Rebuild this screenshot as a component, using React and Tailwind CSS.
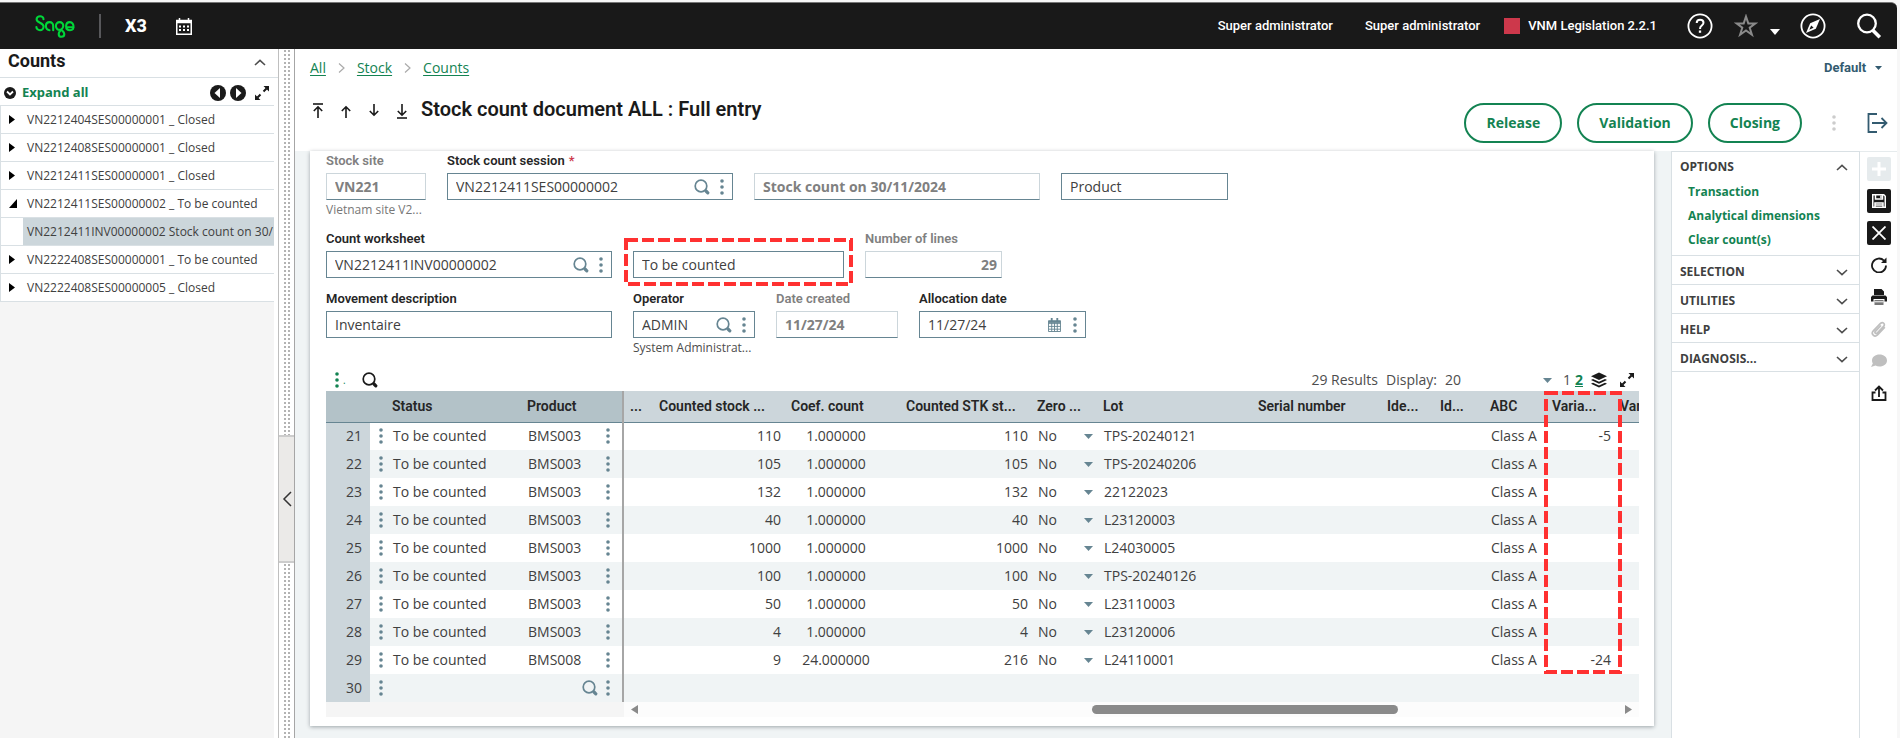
import React, { useState } from 'react';
import clsx from 'clsx';

const treeItems = [
  { label: 'VN2212404SES00000001 _ Closed' },
  { label: 'VN2212408SES00000001 _ Closed' },
  { label: 'VN2212411SES00000001 _ Closed' },
  { label: 'VN2212411SES00000002 _ To be counted', open: true },
  { label: 'VN2212411INV00000002 Stock count on 30/11/2024', child: true },
  { label: 'VN2222408SES00000001 _ To be counted' },
  { label: 'VN2222408SES00000005 _ Closed' },
];

const lines = [
  { n: 21, product: 'BMS003', counted: '110', coef: '1.000000', stk: '110', lot: 'TPS-20240121', variance: '-5' },
  { n: 22, product: 'BMS003', counted: '105', coef: '1.000000', stk: '105', lot: 'TPS-20240206' },
  { n: 23, product: 'BMS003', counted: '132', coef: '1.000000', stk: '132', lot: '22122023' },
  { n: 24, product: 'BMS003', counted: '40', coef: '1.000000', stk: '40', lot: 'L23120003' },
  { n: 25, product: 'BMS003', counted: '1000', coef: '1.000000', stk: '1000', lot: 'L24030005' },
  { n: 26, product: 'BMS003', counted: '100', coef: '1.000000', stk: '100', lot: 'TPS-20240126' },
  { n: 27, product: 'BMS003', counted: '50', coef: '1.000000', stk: '50', lot: 'L23110003' },
  { n: 28, product: 'BMS003', counted: '4', coef: '1.000000', stk: '4', lot: 'L23120006' },
  { n: 29, product: 'BMS008', counted: '9', coef: '24.000000', stk: '216', lot: 'L24110001', variance: '-24' },
  { n: 30 },
];

const menus = ['SELECTION', 'UTILITIES', 'HELP', 'DIAGNOSIS...'];

/* ---------- icons ---------- */

function Dots({ className }) {
  return (
    <svg viewBox="0 0 4 16" className={clsx('w-1 h-4', className)} fill="currentColor">
      <circle cx="2" cy="2" r="1.8" />
      <circle cx="2" cy="8" r="1.8" />
      <circle cx="2" cy="14" r="1.8" />
    </svg>
  );
}

function SearchIcon({ className }) {
  return (
    <svg viewBox="0 0 16 16" className={className} fill="none" stroke="currentColor">
      <circle cx="7" cy="7" r="5.8" strokeWidth="1.7" />
      <path d="M12 12l1.800 1.800" strokeWidth="3.2" strokeLinecap="round" />
    </svg>
  );
}

function Caret({ className }) {
  return (
    <svg viewBox="0 0 8 5" className={clsx('pointer-events-none shrink-0', className)} fill="currentColor" preserveAspectRatio="none">
      <path d="M0 0h8L4 5z" />
    </svg>
  );
}

function Chevron({ up }) {
  return (
    <svg viewBox="0 0 12 7" className="w-3 h-[7px] text-[#4d4d4d]" fill="none" stroke="currentColor" strokeWidth="1.6">
      <path d={up ? 'M1 6l5-4.6L11 6' : 'M1 1l5 4.6L11 1'} />
    </svg>
  );
}

function ExpandIcon() {
  return (
    <svg viewBox="0 0 16 16" className="w-4 h-4" fill="currentColor">
      <path d="M9.500 1H15v5.500zM1 9.500V15h5.500z" />
      <path d="M9.500 6.500l3-3M6.500 9.500l-3 3" stroke="currentColor" strokeWidth="2" />
    </svg>
  );
}

function StepArrow({ down, bar }) {
  return (
    <svg viewBox="0 0 12 16" className="w-3 h-4" fill="none" stroke="currentColor" strokeWidth="1.6">
      <path d={down ? 'M6 1v11M1.8 8L6 12.2 10.2 8' : 'M6 15V4M1.8 8L6 3.8 10.2 8'} />
      {bar && <path d={down ? 'M1 15h10' : 'M1 1h10'} />}
    </svg>
  );
}

function SageLogo() {
  return (
    <svg viewBox="0 0 40 23" className="w-10 h-[23px]" fill="none" stroke="#00d639" strokeWidth="2.1" strokeLinecap="round">
      <path d="M8.5 4.2C8.5 2.3 7 1.2 5.1 1.2S1.6 2.5 1.6 4.3c0 4 7 2.900 7 7.300 0 2.100-1.600 3.600-3.600 3.600S1.400 13.900 1.400 12" />
      <path d="M18.200 15.200v-4.300c0-2.300-1.500-3.800-3.600-3.800s-3.700 1.600-3.700 4 1.600 4.100 3.600 4.100" />
      <path d="M25.500 14.800c-2.400.6-4.600-1.200-4.600-3.700 0-2.300 1.600-4 3.700-4s3.700 1.700 3.700 4c0 3.200-4.600 4.700-4.600 7.800 0 1.700 1.200 2.900 2.800 2.900s2.800-1.200 2.800-2.800c0-1.400-.9-2.300-1.800-3.100" />
      <path d="M31.500 12.200h7c.2-3-1.300-5.100-3.600-5.100-2.200 0-3.800 1.700-3.800 4.100s1.600 4.100 3.900 4.100c1.300 0 2.400-.5 3.100-1.400" />
    </svg>
  );
}

/* ---------- form parts ---------- */

function Field({ id, label, width, value, readOnly, required, helper, search, calendar, number, children }) {
  const muted = readOnly;
  return (
    <div className={clsx('relative', width, !label && 'pt-5')}>
      {label && (
        <label htmlFor={id} className={clsx("block mb-1 font-['Roboto',sans-serif] text-[13px] leading-4 font-semibold whitespace-nowrap", muted ? 'text-[#808080]' : 'text-[#262626]')}>
          {label}
          {required && <span className="ml-1 text-[#cd384b]">*</span>}
        </label>
      )}
      <div
        className={clsx(
          'flex items-center h-[27px] border bg-white',
          muted ? 'border-[#ccd6db] border-b-[#668592]' : 'border-[#668592]'
        )}
      >
        <input
          id={id}
          aria-label={label ? undefined : id}
          defaultValue={value}
          readOnly={readOnly}
          className={clsx(
            'min-w-0 flex-1 h-full text-sm outline-none',
            number ? 'text-right px-1' : 'px-2',
            muted ? 'font-bold text-[#808080]' : 'text-[#404040]'
          )}
        />
        {search && (
          <button aria-label="Search" className="mr-2.5 text-[#668592]">
            <SearchIcon className="w-4 h-4" />
          </button>
        )}
        {calendar && (
          <button aria-label="Pick a date" className="mr-3 text-[#668592]">
            <svg viewBox="0 0 14 15" className="w-[13px] h-3.5" fill="none" stroke="currentColor">
              <path d="M0.500 3h13v11.500h-13zM0.500 6h13M0.500 9h13M0.500 12h13M4 5v9.500M7 5v9.500M10 5v9.500" />
              <path d="M0.500 4h13" strokeWidth="2.500" />
              <path d="M4 0v4M10 0v4" strokeWidth="2" />
            </svg>
          </button>
        )}
        {(search || calendar) && (
          <button aria-label="Actions" className="mr-2 text-[#668592]">
            <Dots />
          </button>
        )}
      </div>
      {helper && <p className={clsx('mt-0.5 text-xs leading-4 whitespace-nowrap', muted ? 'text-[#777]' : 'text-[#4d4d4d]')}>{helper}</p>}
      {children}
    </div>
  );
}

function HighlightBox({ className, w, h }) {
  return (
    <svg viewBox={`0 0 ${w} ${h}`} className={clsx('absolute pointer-events-none', className)} fill="none">
      <rect x="2" y="2" width={w - 4} height={h - 4} stroke="#ff3131" strokeWidth="4" strokeDasharray="12 4" />
    </svg>
  );
}

/* ---------- page sections ---------- */

function Header() {
  return (
    <header className="flex items-center h-[47px] pl-[35px] pr-[15px] bg-[#191919] border-t border-[#777] rounded-tr-md text-white font-['Roboto',sans-serif]">
      <SageLogo />
      <span className="ml-6 w-0.5 h-6 bg-[#58585b]" />
      <span className="ml-6 text-lg font-extrabold">X3</span>
      <button aria-label="Calendar" className="ml-[29px]">
        <svg viewBox="0 0 16 17" className="w-4 h-[17px]" fill="none" stroke="currentColor">
          <path d="M0.750 2.500h14.500v13.750H0.750z" strokeWidth="1.500" />
          <path d="M0.750 4h14.500" strokeWidth="2.500" />
          <path d="M3.500 0v3M12.500 0v3" strokeWidth="1.500" />
          <path d="M3 8.500h10M3 12h10" strokeWidth="2" strokeDasharray="2 2" />
        </svg>
      </button>

      <div className="ml-auto flex items-center text-[13px] font-medium">
        <span>Super administrator</span>
        <span className="ml-8">Super administrator</span>
        <span className="ml-6 w-4 h-4 bg-[#cd384b]" />
        <span className="ml-2">VNM Legislation 2.2.1</span>
        <button aria-label="Help" className="ml-[30px]">
          <svg viewBox="0 0 26 26" className="w-[26px] h-[26px]" fill="none" stroke="currentColor">
            <circle cx="13" cy="13" r="11.600" strokeWidth="1.800" />
            <path d="M9.700 10c0-2 1.400-3.300 3.400-3.300s3.400 1.200 3.400 3.100c0 2.600-3.400 2.800-3.400 5.400v.8" strokeWidth="2" />
            <path d="M13 17.500v2.300" strokeWidth="2.300" />
          </svg>
        </button>
        <button aria-label="Favourites" className="ml-[21px] flex items-center text-[#8a8a8a]">
          <svg viewBox="0 0 24 24" className="w-6 h-6" fill="none" stroke="currentColor" strokeWidth="2">
            <path d="M12 2.500l2.300 6.900h7.200l-5.800 4.300 2.200 7L12 16.400l-5.900 4.300 2.200-7-5.800-4.300h7.200z" />
          </svg>
          <Caret className="w-2.5 h-1.5 ml-3 mt-3 text-white" />
        </button>
        <button aria-label="Navigate" className="ml-5">
          <svg viewBox="0 0 26 26" className="w-[26px] h-[26px]" fill="none" stroke="currentColor">
            <circle cx="13" cy="13" r="11.600" strokeWidth="1.800" />
            <path d="M20 6l-4.200 9.800L6 20l4.200-9.800z" fill="currentColor" stroke="none" />
            <path d="M9.300 16.700l1.900-4.300 2.400 2.400z" fill="#191919" stroke="none" />
          </svg>
        </button>
        <button aria-label="Search" className="ml-[30px]">
          <svg viewBox="0 0 26 26" className="w-[26px] h-[26px]" fill="none" stroke="currentColor">
            <circle cx="11" cy="10.500" r="8.800" strokeWidth="2.300" />
            <path d="M16.800 17.200l7 7" strokeWidth="3.600" />
          </svg>
        </button>
      </div>
    </header>
  );
}

function Sidebar() {
  return (
    <aside className="w-[279px] shrink-0 flex flex-col border-r border-[#bfbfbf] bg-white">
      <div className="flex items-start justify-between h-[29px] pl-2 pr-3 border-b border-[#d9e0e4]">
        <h2 className="font-['Roboto',sans-serif] text-lg leading-6 font-bold text-[#1a1a1a]">Counts</h2>
        <button aria-label="Collapse" className="mt-2.5">
          <Chevron up />
        </button>
      </div>
      <div className="flex items-center h-[27px] pt-0.5 pl-1 pr-2 text-[#1a1a1a]">
        <svg viewBox="0 0 12 12" className="w-3 h-3" fill="none">
          <circle cx="6" cy="6" r="6" fill="currentColor" />
          <path d="M3 4.500l3 3 3-3" stroke="#fff" strokeWidth="1.800" />
        </svg>
        <button className="ml-1.5 font-['Noto_Sans',sans-serif] text-[13px] font-bold text-[#138352]">Expand all</button>
        <button aria-label="Previous" className="ml-auto">
          <svg viewBox="0 0 16 16" className="w-4 h-4">
            <circle cx="8" cy="8" r="8" fill="currentColor" />
            <path d="M10 3v10L4.500 8z" fill="#fff" />
          </svg>
        </button>
        <button aria-label="Next" className="ml-1">
          <svg viewBox="0 0 16 16" className="w-4 h-4">
            <circle cx="8" cy="8" r="8" fill="currentColor" />
            <path d="M6 3v10l5.500-5z" fill="#fff" />
          </svg>
        </button>
        <button aria-label="Full screen" className="ml-2">
          <ExpandIcon />
        </button>
      </div>
      <div className="flex-1 mr-1 border-t border-[#d9e0e4] bg-[#f5f5f5]">
        <ul className="text-xs text-[#404040]">
          {treeItems.map((item) => (
            <li key={item.label} className="flex items-stretch h-7 border-l border-b border-[#d9e0e4] bg-white">
              <span className="w-[22px] shrink-0 flex items-center pl-2 text-black">
                {!item.child && (
                  <svg viewBox="0 0 8 10" className={clsx('h-[9px]', item.open ? 'w-2' : 'w-1.5')} preserveAspectRatio="none" fill="currentColor">
                    <path d={item.open ? 'M8 0v10H0z' : 'M0 0l8 5-8 5z'} />
                  </svg>
                )}
              </span>
              <span className={clsx('flex-1 pl-1 leading-[27px] whitespace-nowrap overflow-hidden', item.child && 'bg-[#ccd6db]')}>{item.label}</span>
            </li>
          ))}
        </ul>
      </div>
    </aside>
  );
}

function Splitter() {
  return (
    <div className="w-4 shrink-0 flex flex-col items-center justify-center border-r border-[#a6a6a6]">
      <div className="w-2 flex-1 bg-[radial-gradient(#b3b3b3_1px,transparent_1px)] bg-[size:4px_4px]" />
      <button aria-label="Collapse panel" className="w-full h-32 flex items-center justify-center bg-[#ebeae8] border-y-2 border-[#ccc] text-[#333]">
        <svg viewBox="0 0 10 16" className="w-2.5 h-4" fill="none" stroke="currentColor" strokeWidth="1.500">
          <path d="M9 1L2 8l7 7" />
        </svg>
      </button>
      <div className="w-2 h-[175px] bg-[radial-gradient(#b3b3b3_1px,transparent_1px)] bg-[size:4px_4px]" />
    </div>
  );
}

function TitleBar() {
  return (
    <div className="pl-[15px] pr-[9px] pt-2">
      <div className="flex items-center justify-between h-[22px]">
        <nav className="flex items-center text-sm text-[#138352]">
          <a href="#all" className="underline underline-offset-2">All</a>
          <span className="px-3 text-[#aaa]">
            <svg viewBox="0 0 7 10" className="w-[7px] h-2.5" fill="none" stroke="currentColor" strokeWidth="1.200"><path d="M1 0.500L6 5 1 9.500" /></svg>
          </span>
          <a href="#stock" className="underline underline-offset-2">Stock</a>
          <span className="px-3 text-[#aaa]">
            <svg viewBox="0 0 7 10" className="w-[7px] h-2.5" fill="none" stroke="currentColor" strokeWidth="1.200"><path d="M1 0.500L6 5 1 9.500" /></svg>
          </span>
          <a href="#counts" className="underline underline-offset-2">Counts</a>
        </nav>
        <div className="flex items-center pr-1.5 text-[#335b70]">
          <select aria-label="Layout" className="appearance-none font-['Roboto',sans-serif] text-[13px] leading-4 font-bold mr-2">
            <option>Default</option>
          </select>
          <Caret className="w-[7px] h-1" />
        </div>
      </div>
      <div className="flex items-start h-[57px] mt-[15px]">
        <div className="flex items-center gap-4 h-[34px] ml-0.5 text-[#1a1a1a]">
          <button aria-label="First"><StepArrow bar /></button>
          <button aria-label="Previous"><StepArrow /></button>
          <button aria-label="Next"><StepArrow down /></button>
          <button aria-label="Last"><StepArrow down bar /></button>
        </div>
        <h1 className="ml-[13px] font-['Roboto',sans-serif] text-xl leading-[30px] font-semibold text-[#1a1a1a]">Stock count document ALL : Full entry</h1>
        <div className="ml-auto mt-[9px] flex items-center gap-[15px] text-sm font-bold text-[#138352]">
          <button className="h-10 px-5 border-2 border-[#138352] rounded-full">Release</button>
          <button className="h-10 px-5 border-2 border-[#138352] rounded-full">Validation</button>
          <button className="h-10 px-5 border-2 border-[#138352] rounded-full">Closing</button>
          <button aria-label="More" className="mx-[15px] text-[#ccc]">
            <Dots />
          </button>
          <button aria-label="Exit" className="text-[#335b70]">
            <svg viewBox="0 0 22 22" className="w-[22px] h-[22px]" fill="none" stroke="currentColor" strokeWidth="1.800">
              <path d="M11 2H2.500v18H11M6 11h14M15.500 6l5 5-5 5" />
            </svg>
          </button>
        </div>
      </div>
    </div>
  );
}

function LinesTable() {
  return (
    <div className="relative">
      <table className="w-full table-fixed text-sm text-[#404040] whitespace-nowrap">
        <colgroup>
          <col className="w-11" />
          <col className="w-4" />
          <col className="w-[135px]" />
          <col className="w-[102px]" />
          <col className="w-[30px]" />
          <col className="w-[132px]" />
          <col className="w-[101px]" />
          <col className="w-[145px]" />
          <col className="w-[66px]" />
          <col className="w-[155px]" />
          <col />
          <col className="w-[53px]" />
          <col className="w-[50px]" />
          <col className="w-[62px]" />
          <col className="w-[68px]" />
          <col className="w-[25px]" />
        </colgroup>
        <thead>
          <tr className="h-[31px] border-b border-[#668592] bg-[#ccd6db] text-left font-['Roboto',sans-serif] text-[#262626] [&>th]:font-semibold [&>th]:pl-1.5">
            <th className="bg-[#b3c2c8]" aria-label="Line" />
            <th className="bg-[#b3c2c8]" aria-label="Actions" />
            <th className="bg-[#b3c2c8]">Status</th>
            <th className="bg-[#b3c2c8] border-r-2 border-r-[#a6a6a6]">Product</th>
            <th className="overflow-hidden">...</th>
            <th>Counted stock ...</th>
            <th>Coef. count</th>
            <th><span className="pl-3.5">Counted STK st...</span></th>
            <th>Zero ...</th>
            <th>Lot</th>
            <th>Serial number</th>
            <th>Ide...</th>
            <th>Id...</th>
            <th>ABC</th>
            <th>Varia...</th>
            <th className="overflow-hidden">Variance</th>
          </tr>
        </thead>
        <tbody>
          {lines.map((line) => (
            <tr key={line.n} className="h-7 even:bg-[#f0f4f5] [&>td]:pl-[7px]">
              <td className="bg-[#ccd6db] pr-2 text-right">{line.n}</td>
              <td>
                <button aria-label="Line actions" className="flex ml-0.5 text-[#668592]"><Dots /></button>
              </td>
              <td>{line.product && 'To be counted'}</td>
              <td className="border-r-2 border-[#a6a6a6]">
                <div className="flex items-center pr-3 text-[#668592]">
                  <span className="text-[#404040]">{line.product}</span>
                  {!line.product && (
                    <button aria-label="Select product" className="ml-auto mr-2">
                      <SearchIcon className="w-4 h-4" />
                    </button>
                  )}
                  <button aria-label="Product actions" className={clsx(line.product && 'ml-auto')}>
                    <Dots />
                  </button>
                </div>
              </td>
              <td />
              <td className="pr-1 text-right">{line.counted}</td>
              <td className="pr-1.5 text-center">{line.coef}</td>
              <td className="pr-[3px] text-right">{line.stk}</td>
              <td>
                {line.product && (
                  <div className="flex items-center pr-1">
                    <select aria-label="Zero stock" className="flex-1 min-w-0 appearance-none">
                      <option>No</option>
                      <option>Yes</option>
                    </select>
                    <Caret className="w-[9px] h-[5px] text-[#668592]" />
                  </div>
                )}
              </td>
              <td>{line.lot}</td>
              <td />
              <td />
              <td />
              <td>{line.product && 'Class A'}</td>
              <td className="pr-[3px] text-right">{line.variance}</td>
              <td />
            </tr>
          ))}
        </tbody>
      </table>
      <div className="flex items-center h-[15px]">
        <div className="w-[298px] h-full bg-[#f5f5f5]" />
        <div className="flex-1 flex items-center h-full px-[7px] bg-[#fcfcfc] text-[#8a8a8a]">
          <svg viewBox="0 0 7 9" className="w-[7px] h-[9px]" fill="currentColor"><path d="M7 0v9L0 4.500z" /></svg>
          <div className="flex-1 flex justify-end">
            <div className="w-[31%] h-[9px] mr-[23%] rounded-full bg-[#8a8a8a]" />
          </div>
          <svg viewBox="0 0 7 9" className="w-[7px] h-[9px]" fill="currentColor"><path d="M0 0v9l7-4.500z" /></svg>
        </div>
      </div>
      <HighlightBox w={78} h={283} className="top-0 right-[17px] w-[78px] h-[283px]" />
    </div>
  );
}

function CountForm() {
  return (
    <div className="flex flex-col gap-[13px] bg-white pl-4 pr-[15px] pt-0.5 pb-[9px] shadow-[0_1px_4px_rgba(0,20,30,0.35)]">
      <div className="flex items-start gap-[21px]">
        <Field id="site" label="Stock site" width="w-[100px]" value="VN221" readOnly helper="Vietnam site V2..." />
        <Field id="session" label="Stock count session" required width="w-[286px]" value="VN2212411SES00000002" search />
        <Field id="Session description" width="w-[286px]" value="Stock count on 30/11/2024" readOnly />
        <Field id="Count type" width="w-[167px]" value="Product" />
      </div>
      <div className="flex items-start gap-[21px]">
        <Field id="worksheet" label="Count worksheet" width="w-[286px]" value="VN2212411INV00000002" search />
        <Field id="Worksheet status" width="w-[211px]" value="To be counted">
          <HighlightBox w={229} h={48} className="-left-[9px] top-[7px] w-[229px] h-12" />
        </Field>
        <Field id="lines" label="Number of lines" width="w-[137px]" value="29" readOnly number />
      </div>
      <div className="flex items-start gap-[21px]">
        <Field id="movement" label="Movement description" width="w-[286px]" value="Inventaire" />
        <Field id="operator" label="Operator" width="w-[122px]" value="ADMIN" search helper="System Administrat..." />
        <Field id="created" label="Date created" width="w-[122px]" value="11/27/24" readOnly />
        <Field id="allocation" label="Allocation date" width="w-[167px]" value="11/27/24" calendar />
      </div>
      <div>
        <div className="flex items-center h-[22px] pl-[9px] pr-1 text-sm text-[#4d4d4d]">
          <button aria-label="Table actions" className="flex items-end text-[#138352]">
            <Dots />
            <span className="ml-1 leading-4 text-[10px]">.</span>
          </button>
          <button aria-label="Search lines" className="ml-4 text-[#1a1a1a]">
            <SearchIcon className="w-4 h-4" />
          </button>
          <span className="ml-auto">29 Results</span>
          <label htmlFor="display" className="ml-2">Display:</label>
          <select id="display" defaultValue="20" className="appearance-none ml-2 w-[98px]">
            <option>20</option>
            <option>50</option>
          </select>
          <Caret className="w-[9px] h-[5px] text-[#668592]" />
          <a href="#p1" className="ml-[11px]">1</a>
          <a href="#p2" className="ml-1 font-bold underline text-[#138352]">2</a>
          <button aria-label="Layers" className="ml-2 text-[#1a1a1a]">
            <svg viewBox="0 0 16 16" className="w-4 h-4" fill="currentColor">
              <path d="M8 0.500l8 3.700-8 3.700-8-3.700z" />
              <path d="M2 7l6 2.800L14 7l2 1-8 3.700L0 8zM2 10.800l6 2.800 6-2.800 2 1-8 3.700-8-3.700z" />
            </svg>
          </button>
          <button aria-label="Full screen" className="ml-3 text-[#1a1a1a]">
            <ExpandIcon />
          </button>
        </div>
        <LinesTable />
      </div>
    </div>
  );
}

function OptionsPanel() {
  const [open, setOpen] = useState(true);
  return (
    <aside className="w-[189px] shrink-0 border-l border-t border-r border-[#d9e0e4] bg-white">
      <div className="border-b border-[#d9e0e4] pb-[3px]">
        <button onClick={() => setOpen(!open)} className="flex items-center justify-between w-full h-7 pt-0.5 pl-2 pr-[11px] text-xs font-bold text-[#404040]">
          OPTIONS
          <Chevron up={open} />
        </button>
        {open && (
          <ul className="pl-4 text-xs leading-6 font-bold text-[#138352]">
            <li><a href="#transaction">Transaction</a></li>
            <li><a href="#dimensions">Analytical dimensions</a></li>
            <li><a href="#clear">Clear count(s)</a></li>
          </ul>
        )}
      </div>
      {menus.map((m) => (
        <button key={m} className="flex items-center justify-between w-full h-[29px] pl-2 pr-[11px] pt-1 border-b border-[#d9e0e4] text-xs font-bold text-[#404040]">
          {m}
          <Chevron />
        </button>
      ))}
    </aside>
  );
}

function ActionRail() {
  return (
    <div className="w-[37px] shrink-0 flex flex-col items-center gap-2 pt-[5px] border-t border-[#e6ebed] text-[#1a1a1a] [&>button]:flex [&>button]:items-center [&>button]:justify-center [&>button]:size-6">
      <button aria-label="New" className="rounded-xs bg-[#e6ebed] text-white">
        <svg viewBox="0 0 14 14" className="w-3.5 h-3.5" stroke="currentColor" strokeWidth="3"><path d="M7 0v14M0 7h14" /></svg>
      </button>
      <button aria-label="Save" className="rounded-xs bg-[#191919] text-white">
        <svg viewBox="0 0 14 14" className="w-3.5 h-3.5" fill="none" stroke="currentColor" strokeWidth="1.500">
          <path d="M0.750 0.750h11l1.500 1.500v11H0.750zM3.500 1v4h7V1M3 13.500V9h8v4.500M3 11h8" />
          <path d="M9 1.500v2.500" />
        </svg>
      </button>
      <button aria-label="Cancel" className="rounded-xs bg-[#191919] text-white">
        <svg viewBox="0 0 14 14" className="w-3.5 h-3.5" stroke="currentColor" strokeWidth="1.800"><path d="M0.500 0.500l13 13M13.500 0.500l-13 13" /></svg>
      </button>
      <button aria-label="Refresh">
        <svg viewBox="0 0 16 16" className="w-4 h-4" fill="none" stroke="currentColor" strokeWidth="1.800">
          <path d="M13 3.600A7 7 0 1 0 15 8.500" />
          <path d="M15.500 0.500v5.500H10z" fill="currentColor" stroke="none" />
        </svg>
      </button>
      <button aria-label="Print">
        <svg viewBox="0 0 16 16" className="w-4 h-4" fill="currentColor">
          <path d="M3 0h7.500L13 2.500V6H3zM1.500 6.500h13L16 8v4.500h-2.500V10h-11v2.500H0V8z" />
          <path d="M3.500 11h9v5h-9z" fill="#777" />
          <path d="M3.500 12.800h9" stroke="#fff" />
        </svg>
      </button>
      <button aria-label="Attachments" className="text-[#bfbfbf]">
        <svg viewBox="0 0 16 16" className="w-4 h-4" fill="none" stroke="currentColor" strokeWidth="1.700">
          <path d="M13.800 6.200L6.500 13.900c-3 2.900-7-1-4.200-4L9.500 2.400c2.300-2.100 5.300.7 3.100 3L6.200 12c-1.500 1.300-3-.3-1.800-1.700L10 4.500" />
        </svg>
      </button>
      <button aria-label="Comments" className="text-[#bfbfbf]">
        <svg viewBox="0 0 16 14" className="w-4 h-3.5" fill="currentColor">
          <path d="M8.500 0.500C12.700 0.500 16 3 16 6.500s-3.300 6-7.500 6c-1.500 0-2.900-.3-4-.9L0 13l1.800-3.500C1.200 8.600 1 7.600 1 6.500 1 3 4.300.5 8.500.5z" />
        </svg>
      </button>
      <button aria-label="Share">
        <svg viewBox="0 0 16 16" className="w-4 h-4" fill="none" stroke="currentColor" strokeWidth="1.800">
          <path d="M4.500 7.500H1.500V15h13V7.500h-3M8 12V2M4 5.500l4-4 4 4" />
        </svg>
      </button>
    </div>
  );
}

export default function App() {
  return (
    <div className="min-h-screen flex flex-col pt-0.5 pr-[3px] bg-[#f7f7f7] font-['Open_Sans',sans-serif]">
      <Header />
      <div className="flex-1 flex bg-white">
        <Sidebar />
        <Splitter />
        <main className="flex-1 min-w-0 flex flex-col">
          <TitleBar />
          <div className="flex-1 flex">
            <div className="flex-1 min-w-0 pl-[15px] pr-[17px] pb-[11px] bg-[#f0f4f5]">
              <CountForm />
            </div>
            <OptionsPanel />
            <ActionRail />
          </div>
        </main>
      </div>
    </div>
  );
}
